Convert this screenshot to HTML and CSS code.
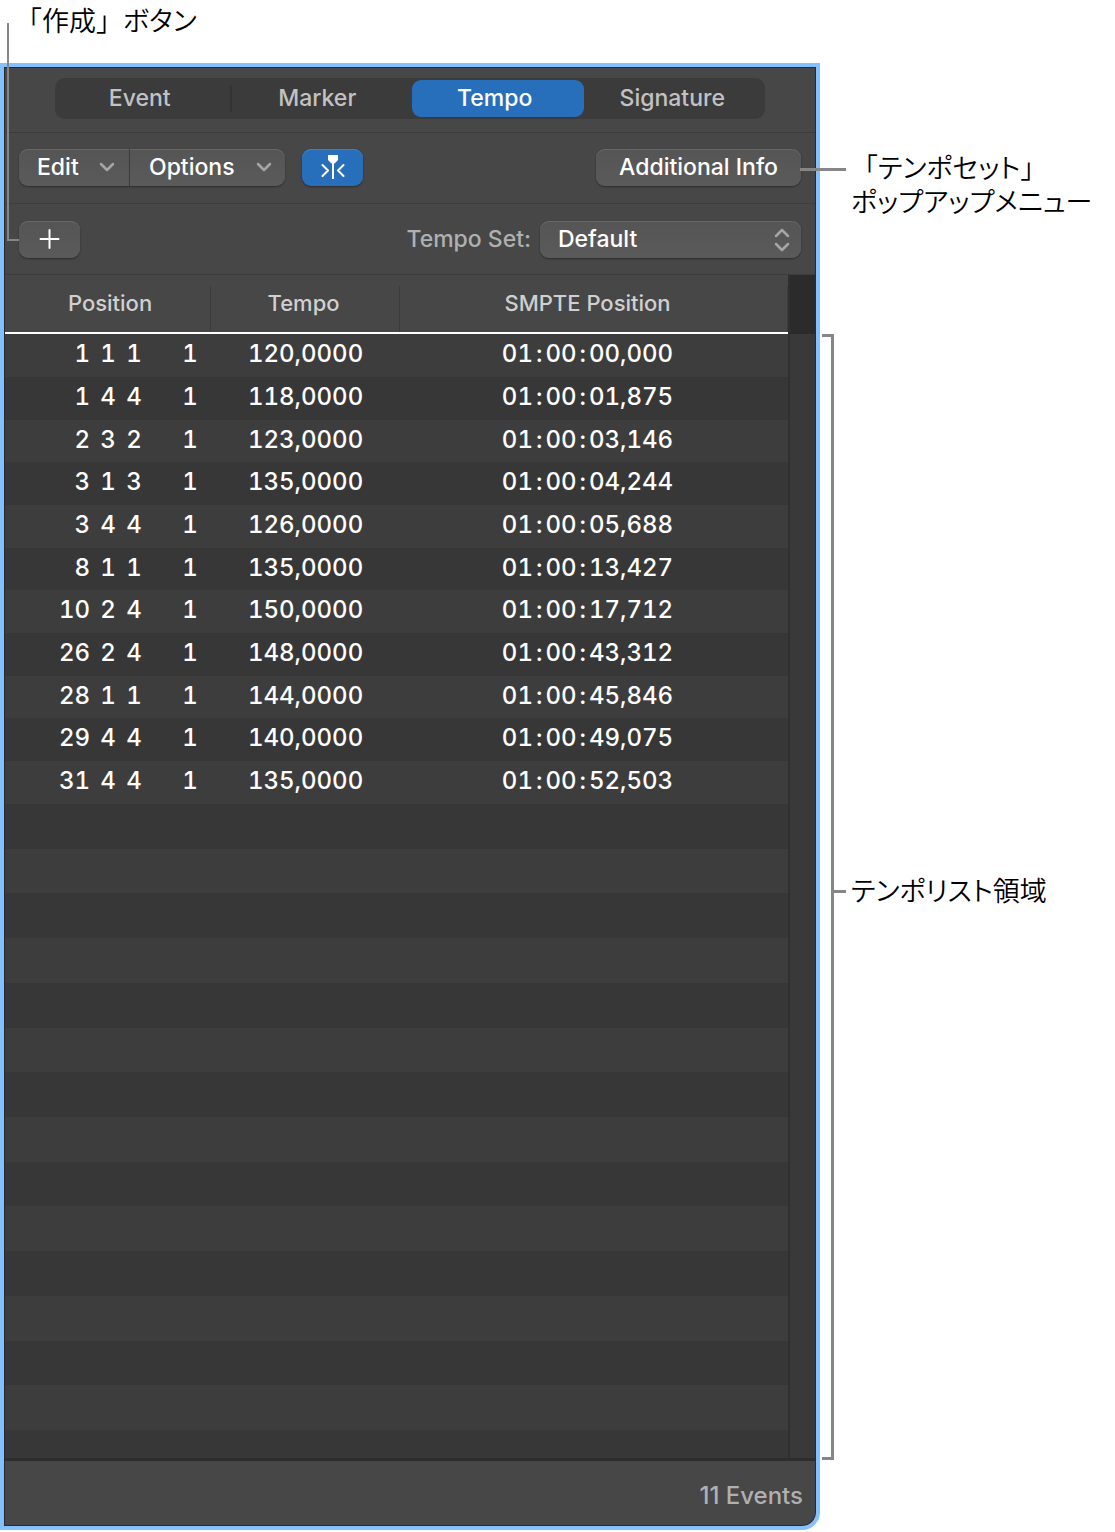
FILE: index.html
```html
<!DOCTYPE html>
<html lang="ja">
<head>
  <meta charset="UTF-8" />
  <meta name="viewport" content="width=device-width, initial-scale=1.0" />
  <title>Tempo List</title>
  <link rel="stylesheet" href="styles.css">
</head>
<body>
  <div class="figure">
    <p class="callout callout-create"><span class="bracket">「</span>作成<span class="bracket">」</span>ボタン</p>

    <div class="panel" lang="en">
      <span class="leader leader-create"></span>
      <div class="tab-row">
        <div class="tabs">
          <button type="button">Event</button>
          <button type="button">Marker</button>
          <button type="button" class="active">Tempo</button>
          <button type="button">Signature</button>
        </div>
      </div>

      <div class="toolbar menus">
        <div class="menu-group">
          <button type="button" class="btn">Edit
            <svg width="16" height="10" viewBox="0 0 16 10"><path d="M2 2l6 6 6-6" /></svg>
          </button>
          <button type="button" class="btn">Options
            <svg width="16" height="10" viewBox="0 0 16 10"><path d="M2 2l6 6 6-6" /></svg>
          </button>
        </div>
        <button type="button" class="btn icon-btn catch" aria-label="Catch Playhead">
          <svg width="24" height="26" viewBox="0 0 24 26">
            <path class="solid" d="M7 1h10v5l-3.500 3.500h-.5V25h-2V9.500h-.5L7 6z" />
            <path d="M1.500 11l5.500 5.500-5.500 5.500M22.500 11l-5.500 5.500 5.500 5.500" />
          </svg>
        </button>
        <button type="button" class="btn info-btn">Additional Info</button>
        <span class="leader leader-info"></span>
      </div>

      <div class="toolbar">
        <button type="button" class="btn icon-btn" aria-label="Create">
          <svg width="22" height="22" viewBox="0 0 22 22"><path d="M10.500 2v18M1.500 11h18" /></svg>
        </button>
        <label for="tempoSet">Tempo Set:</label>
        <div class="select-wrap">
          <select id="tempoSet" class="btn">
            <option>Default</option>
          </select>
          <svg width="16" height="24" viewBox="0 0 16 24"><path d="M2 8l6-6 6 6M2 16l6 6 6-6" /></svg>
        </div>
      </div>

      <div class="list">
        <div class="list-main">
          <table>
            <colgroup>
              <col class="col-bar"><col class="col-beat"><col class="col-beat"><col class="col-tick">
              <col class="col-tempo"><col>
            </colgroup>
            <thead>
              <tr>
                <th class="position" colspan="4">Position</th>
                <th class="tempo">Tempo</th>
                <th class="smpte">SMPTE Position</th>
              </tr>
            </thead>
            <tbody>
              <tr><td class="bar">1</td><td>1</td><td>1</td><td class="tick">1</td><td>120,0000</td><td class="smpte">01<span>:</span>00<span>:</span>00,000</td></tr>
              <tr><td class="bar">1</td><td>4</td><td>4</td><td class="tick">1</td><td>118,0000</td><td class="smpte">01<span>:</span>00<span>:</span>01,875</td></tr>
              <tr><td class="bar">2</td><td>3</td><td>2</td><td class="tick">1</td><td>123,0000</td><td class="smpte">01<span>:</span>00<span>:</span>03,146</td></tr>
              <tr><td class="bar">3</td><td>1</td><td>3</td><td class="tick">1</td><td>135,0000</td><td class="smpte">01<span>:</span>00<span>:</span>04,244</td></tr>
              <tr><td class="bar">3</td><td>4</td><td>4</td><td class="tick">1</td><td>126,0000</td><td class="smpte">01<span>:</span>00<span>:</span>05,688</td></tr>
              <tr><td class="bar">8</td><td>1</td><td>1</td><td class="tick">1</td><td>135,0000</td><td class="smpte">01<span>:</span>00<span>:</span>13,427</td></tr>
              <tr><td class="bar">10</td><td>2</td><td>4</td><td class="tick">1</td><td>150,0000</td><td class="smpte">01<span>:</span>00<span>:</span>17,712</td></tr>
              <tr><td class="bar">26</td><td>2</td><td>4</td><td class="tick">1</td><td>148,0000</td><td class="smpte">01<span>:</span>00<span>:</span>43,312</td></tr>
              <tr><td class="bar">28</td><td>1</td><td>1</td><td class="tick">1</td><td>144,0000</td><td class="smpte">01<span>:</span>00<span>:</span>45,846</td></tr>
              <tr><td class="bar">29</td><td>4</td><td>4</td><td class="tick">1</td><td>140,0000</td><td class="smpte">01<span>:</span>00<span>:</span>49,075</td></tr>
              <tr><td class="bar">31</td><td>4</td><td>4</td><td class="tick">1</td><td>135,0000</td><td class="smpte">01<span>:</span>00<span>:</span>52,503</td></tr>
            </tbody>
          </table>
          <!-- empty rows below the last event -->
          <div class="stripes">
            <i></i><i></i><i></i><i></i><i></i><i></i><i></i><i></i><i></i><i></i><i></i><i></i><i></i><i></i><i></i>
          </div>
        </div>
        <div class="scrollbar"></div>
      </div>

      <div class="status">11 Events</div>
    </div>

    <div class="notes">
      <p class="callout callout-set"><span class="bracket">「</span>テンポセット<span class="bracket">」</span><br>ポップアップメニュー</p>
      <div class="area">
        <span class="area-bracket"></span>
        <p class="callout callout-area">テンポリスト領域</p>
      </div>
    </div>
  </div>
</body>
</html>
```

FILE: styles.css
```css
* {
  margin: 0;
  padding: 0;
  box-sizing: border-box;
}

body {
  font-family: Inter, "Noto Sans CJK JP", sans-serif;
  background-color: #ffffff;
  color: #ffffff;
}

.figure {
  display: grid;
  grid-template-columns: 1fr 295px;
  grid-template-rows: 63px 1fr;
  min-height: 100vh;
  padding-bottom: 2px;
}

/* callouts */
.callout {
  font-family: "Noto Sans CJK JP", sans-serif;
  font-size: 27px;
  font-weight: 350;
  line-height: 34px;
  color: #000000;
  white-space: nowrap;
  font-feature-settings: "palt";
}

.callout .bracket {
  font-feature-settings: normal;
}

.callout-create {
  grid-column: 1 / 3;
  padding: 3px 0 0 15px;
}

.leader {
  position: absolute;
  z-index: 1;
}

.leader-create {
  left: 3px;
  top: -44px;
  width: 12px;
  height: 218px;
  border: solid #868686;
  border-width: 0 0 2px 2px;
}

.leader-info {
  left: 100%;
  top: 35px;
  width: 46px;
  height: 3px;
  margin-left: -15px;
  background-color: #868686;
}

.notes {
  display: flex;
  flex-direction: column;
  padding: 87px 0 70px 2px;
}

.callout-set {
  padding-left: 29px;
}

.area {
  display: flex;
  align-items: center;
  flex: 1;
  margin-top: 116px;
}

.area-bracket {
  position: relative;
  align-self: stretch;
  width: 12px;
  border: 3px solid #868686;
  border-left: none;
}

.area-bracket::after {
  content: "";
  position: absolute;
  left: 12px;
  top: calc(50% - 7px);
  width: 12px;
  height: 3px;
  background-color: #868686;
}

.callout-area {
  padding: 0 0 14px 17px;
}

/* panel */
.panel {
  position: relative;
  display: flex;
  flex-direction: column;
  border: 4px solid #84bffe;
  border-bottom-right-radius: 18px;
  background-color: #474747;
  box-shadow: inset 0 0 0 1px #2a2a2a;
  padding: 1px;
}

button,
select,
label,
.status {
  font-family: inherit;
  font-size: 23px;
  font-weight: 500;
}

button {
  border: none;
  color: #ffffff;
}

svg {
  fill: none;
  stroke: #a6a6a6;
  stroke-width: 2.5;
  stroke-linecap: round;
  stroke-linejoin: round;
}

.tab-row {
  padding: 10px 50px 13px;
  border-bottom: 1px solid #3c3c3c;
}

.tabs {
  display: flex;
  height: 41px;
  border-radius: 10px;
  background-color: #3b3b3b;
}

.tabs button {
  position: relative;
  flex: 1;
  margin: 2px 4px 2px 2px;
  padding: 0 6px 2px 0;
  border-radius: 9px;
  background: none;
  color: #c2c2c2;
}

.tabs button:first-child::after {
  content: "";
  position: absolute;
  right: -3px;
  top: 5px;
  bottom: 5px;
  width: 2px;
  background-color: #333333;
}

.tabs .active {
  background-color: #276fba;
  color: #ffffff;
}

.toolbar {
  position: relative;
  display: flex;
  align-items: center;
  height: 71px;
  padding: 0 14px;
  border-bottom: 1px solid #3d3d3d;
}

.menus {
  padding-bottom: 2px;
}

.btn {
  height: 37px;
  border-radius: 9px;
  background: linear-gradient(#555555, #5a5a5a);
  box-shadow: 0 1px 2px rgba(0, 0, 0, 0.4), inset 0 1px 0 #676767;
}

.menu-group {
  display: flex;
}

.menu-group .btn {
  display: flex;
  align-items: center;
  justify-content: space-between;
  width: 155px;
  padding: 0 13px 0 19px;
  border-radius: 0 9px 9px 0;
}

.menu-group .btn:first-child {
  width: 111px;
  padding: 0 14px 0 18px;
  border-right: 1px solid #444444;
  border-radius: 9px 0 0 9px;
}

.icon-btn {
  display: flex;
  align-items: center;
  justify-content: center;
  width: 61px;
}

.icon-btn svg {
  stroke: #ffffff;
  stroke-width: 2;
}

.catch {
  margin-left: 17px;
  background: #276fba;
  box-shadow: 0 1px 2px rgba(0, 0, 0, 0.4), inset 0 1px 0 #3d80c4;
}

.catch .solid {
  fill: #ffffff;
  stroke: none;
}

.info-btn {
  width: 205px;
  margin-left: auto;
}

label {
  margin: 0 9px 0 auto;
  color: #b0b0b0;
}

.select-wrap {
  position: relative;
}

.select-wrap select {
  width: 261px;
  padding: 0 18px;
  border: none;
  color: #ffffff;
  appearance: none;
}

.select-wrap svg {
  position: absolute;
  right: 11px;
  top: 7px;
  pointer-events: none;
}

/* event list */
.list {
  display: flex;
  flex: 1;
  border-bottom: 3px solid #2d2d2d;
}

.list-main {
  display: flex;
  flex-direction: column;
  flex: 1;
}

table {
  width: 100%;
  height: 529px;
  table-layout: fixed;
  border-collapse: collapse;
  font-size: 24px;
  font-weight: 500;
  text-align: center;
  font-variant-numeric: tabular-nums;
}

.col-bar {
  width: 90px;
}

.col-beat {
  width: 26px;
}

.col-tick {
  width: 64px;
}

.col-tempo {
  width: 189px;
}

thead tr {
  height: 58px;
  border-bottom: 2px solid #ffffff;
}

th {
  padding-bottom: 2px;
  font-size: 22px;
  font-weight: 500;
  color: #d0d0d0;
  background: linear-gradient(#3c3c3c, #3c3c3c) right bottom / 1px 46px no-repeat;
}

td {
  padding-bottom: 4px;
}

tbody tr {
  background-color: #3d3d3d;
}

tbody tr:nth-child(even) {
  background-color: #373737;
}

.position {
  padding-left: 4px;
}

.tempo {
  padding-right: 4px;
}

.bar {
  padding-right: 5px;
  text-align: right;
}

.tick {
  padding-left: 22px;
}

.smpte {
  padding-right: 13px;
}

.smpte span {
  margin: 0 3px;
}

.stripes {
  display: grid;
  grid-template-rows: repeat(14, 1fr) 28px;
  flex: 1;
}

.stripes i {
  background-color: #373737;
}

.stripes i:nth-child(even) {
  background-color: #3d3d3d;
}

.scrollbar {
  width: 27px;
  border-left: 2px solid #303030;
  background: linear-gradient(#2b2b2b, #2b2b2b) top / 100% 59px no-repeat #393939;
}

.status {
  height: 64px;
  padding-right: 12px;
  font-size: 24px;
  line-height: 70px;
  text-align: right;
  color: #b0b0b0;
}
```
